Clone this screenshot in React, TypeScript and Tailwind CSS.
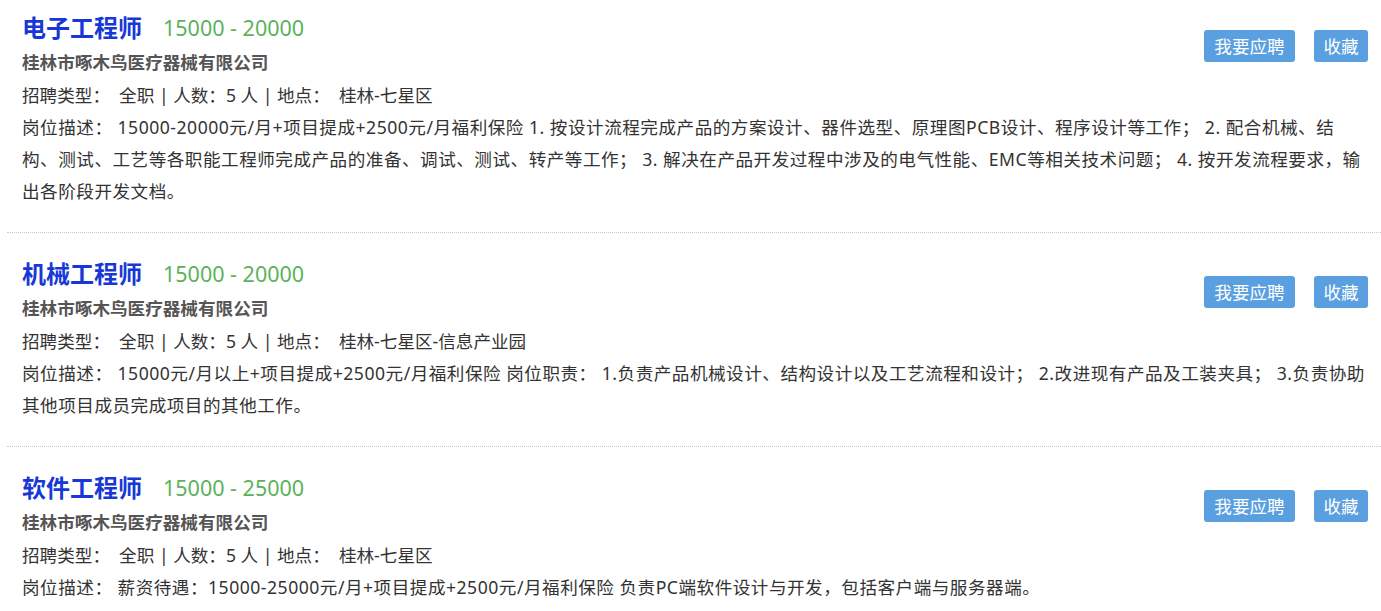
const jobs = [
  {
    title: "电子工程师",
    salary: "15000 - 20000",
    company: "桂林市啄木鸟医疗器械有限公司",
    type: "全职",
    count: "5 人",
    place: "桂林-七星区",
    desc: "15000-20000元/月+项目提成+2500元/月福利保险 1. 按设计流程完成产品的方案设计、器件选型、原理图PCB设计、程序设计等工作； 2. 配合机械、结构、测试、工艺等各职能工程师完成产品的准备、调试、测试、转产等工作； 3. 解决在产品开发过程中涉及的电气性能、EMC等相关技术问题； 4. 按开发流程要求，输出各阶段开发文档。",
  },
  {
    title: "机械工程师",
    salary: "15000 - 20000",
    company: "桂林市啄木鸟医疗器械有限公司",
    type: "全职",
    count: "5 人",
    place: "桂林-七星区-信息产业园",
    desc: "15000元/月以上+项目提成+2500元/月福利保险 岗位职责： 1.负责产品机械设计、结构设计以及工艺流程和设计； 2.改进现有产品及工装夹具； 3.负责协助其他项目成员完成项目的其他工作。",
  },
  {
    title: "软件工程师",
    salary: "15000 - 25000",
    company: "桂林市啄木鸟医疗器械有限公司",
    type: "全职",
    count: "5 人",
    place: "桂林-七星区",
    desc: "薪资待遇：15000-25000元/月+项目提成+2500元/月福利保险 负责PC端软件设计与开发，包括客户端与服务器端。",
  },
];

function JobItem({ job }: { job: (typeof jobs)[number] }) {
  return (
    <div className="border-b border-dotted border-[#c8c8c8] pl-[15px] pr-[13px] pt-[24px] pb-[25px]">
      <div className="flex justify-between items-start">
        <div>
          <div className="flex items-center h-[34px]">
            <span className="text-[24px] font-bold text-[#1738d6] leading-[34px]">{job.title}</span>
            <span className="ml-[21px] text-[21.5px] text-[#5cb25a] leading-[34px]">{job.salary}</span>
          </div>
          <div className="text-[17.6px] font-bold text-[#555] leading-[34px]">{job.company}</div>
          <div className="text-[17.6px] text-[#333] leading-[32px] whitespace-pre">
            {"招聘类型：  " + job.type + " | 人数：" + job.count + " | 地点：  " + job.place}
          </div>
        </div>
        <div className="flex gap-[19px] mt-[19px]">
          <button className="h-[32px] w-[91px] rounded-[3px] bg-[#5a9fdf] text-white text-[17.6px]">我要应聘</button>
          <button className="h-[32px] w-[54px] rounded-[3px] bg-[#5a9fdf] text-white text-[17.6px]">收藏</button>
        </div>
      </div>
      <div className="text-[17.6px] text-[#333] leading-[32px] tracking-[0.5px]">
        <span className="whitespace-pre">岗位描述： </span>
        {job.desc}
      </div>
    </div>
  );
}

export default function App() {
  return (
    <div
      className="w-[1381px] h-[611px] overflow-hidden bg-white"
      style={{ fontFamily: '"Noto Sans", "Noto Sans CJK SC", sans-serif' }}
    >
      <div className="-mt-[13px] pl-[7px]">
        {jobs.map((j, i) => (
          <JobItem key={i} job={j} />
        ))}
      </div>
    </div>
  );
}
